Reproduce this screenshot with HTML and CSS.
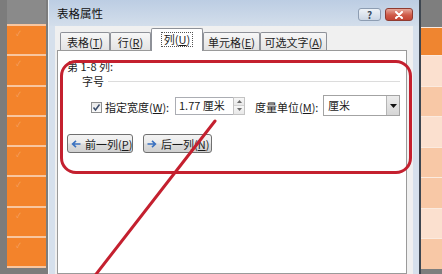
FILE: index.html
```html
<!DOCTYPE html>
<html lang="zh-CN">
<head>
<meta charset="utf-8">
<title>表格属性</title>
<link rel="stylesheet" href="styles.css">
</head>
<body>
<div class="screen">
  <div class="sheet-left">
    <div class="cells">
      <div class="head"></div>
      <div class="cell"><span class="mark">✓</span></div>
      <div class="cell"><span class="mark">✓</span></div>
      <div class="cell"><span class="mark">✓</span></div>
      <div class="cell"><span class="mark">✓</span></div>
      <div class="cell"><span class="mark">✓</span></div>
      <div class="cell"><span class="mark">✓</span></div>
      <div class="cell"><span class="mark">✓</span></div>
      <div class="cell last"><span class="mark">✓</span></div>
    </div>
  </div>

  <div class="dialog">
    <div class="titlebar">
      <span class="title">表格属性</span>
      <div class="caption">
        <span class="cbtn help">?</span>
        <span class="cbtn close">
          <svg width="10" height="8" viewBox="0 0 10 8"><path d="M2 1 L8 7 M8 1 L2 7" stroke="#fff" stroke-width="2" stroke-linecap="round"/></svg>
        </span>
      </div>
    </div>
    <div class="frame">
      <div class="client">
        <div class="tabs">
          <div class="tab t1">表格(<u>T</u>)</div>
          <div class="tab t2">行(<u>R</u>)</div>
          <div class="tab t3 sel"><span class="focus">列(<u>U</u>)</span></div>
          <div class="tab t4">单元格(<u>E</u>)</div>
          <div class="tab t5">可选文字(<u>A</u>)</div>
        </div>
        <div class="panel">
          <div class="cols-label">第 1-8 列:</div>
          <div class="group-head"><span>字号</span><span class="rule"></span></div>
          <div class="width-row">
            <span class="check">
              <svg width="9" height="9" viewBox="0 0 9 9"><path d="M1.5 4.5 L3.5 7 L7.5 1.5" fill="none" stroke="#3b4d6b" stroke-width="1.5"/></svg>
            </span>
            <span class="lab lab1">指定宽度(<u>W</u>):</span>
            <div class="spin">
              <span class="val">1.77 厘米</span>
              <span class="spinbtns">
                <span class="sb"><svg width="5" height="3" viewBox="0 0 5 3"><path d="M0 3 L2.5 0 L5 3Z" fill="#6b6b6b"/></svg></span>
                <span class="sb"><svg width="5" height="3" viewBox="0 0 5 3"><path d="M0 0 L2.5 3 L5 0Z" fill="#6b6b6b"/></svg></span>
              </span>
            </div>
            <span class="lab lab2">度量单位(<u>M</u>):</span>
            <div class="select">
              <span class="sval">厘米</span>
              <span class="arrow"><svg width="7" height="4" viewBox="0 0 7 4"><path d="M0 0 L3.5 4 L7 0Z" fill="#111"/></svg></span>
            </div>
          </div>
          <div class="nav-row">
            <span class="btn b1">
              <svg class="ico" width="10" height="8" viewBox="0 0 10 8"><path d="M9.5 4 H2 M5 0.8 L1.6 4 L5 7.2" fill="none" stroke="#3b72c0" stroke-width="1.6"/></svg>
              <span class="btxt">前一列(<u>P</u>)</span>
            </span>
            <span class="btn b2">
              <svg class="ico" width="10" height="8" viewBox="0 0 10 8"><path d="M0.5 4 H8 M5 0.8 L8.4 4 L5 7.2" fill="none" stroke="#3b72c0" stroke-width="1.6"/></svg>
              <span class="btxt">后一列(<u>N</u>)</span>
            </span>
          </div>
        </div>
      </div>
    </div>
  </div>

  <div class="sheet-right">
    <div class="rhead"></div>
    <div class="rrow first orange"></div>
    <div class="rrow light"></div>
    <div class="rrow med"></div>
    <div class="rrow light"></div>
    <div class="rrow med"></div>
    <div class="rrow med"></div>
    <div class="rrow light"></div>
    <div class="rrow med"></div>
  </div>

  <div class="annot-rect"></div>
  <svg class="annot-line" width="442" height="274" viewBox="0 0 442 274">
    <line x1="215" y1="121" x2="90" y2="282" stroke="#c4202f" stroke-width="3" stroke-linecap="round"/>
  </svg>
</div>
</body>
</html>
```

FILE: styles.css
```css
* { box-sizing: border-box; margin: 0; padding: 0; }
html, body { width: 442px; height: 274px; overflow: hidden; }
body {
  font-family: "Noto Sans CJK SC", "Noto Sans", sans-serif;
  font-size: 11px;
  line-height: 14px;
  color: #1b1b1b;
  background: #808080;
}
u { text-decoration: underline; text-underline-offset: 1px; }

.screen { position: relative; display: flex; width: 442px; height: 274px; overflow: hidden; }

/* left spreadsheet strip */
.sheet-left { width: 48px; flex: none; background: #7c7c7c; padding-left: 7px; }
.cells { width: 39px; }
.cells .head { height: 24px; background: #8a8a8a; }
.cell {
  height: 30.3px;
  border-top: 2px solid #f8c6a0;
  background: #f3832b;
  padding: 3px 0 0 9px;
}
.cell.last { height: 32.3px; border-bottom: 2px solid #f8c6a0; }
.mark { display: block; font-size: 7px; line-height: 8px; color: #f5a46a; }

/* dialog */
.dialog {
  width: 373px; flex: none;
  display: flex; flex-direction: column;
  background: #d6e0ec;
  border-left: 1px solid #eef3f8;
  border-right: 2px solid #3e4650;
}
.titlebar {
  height: 26px; flex: none;
  display: flex; align-items: flex-start;
  padding: 6px 6px 0 8px;
  background: linear-gradient(#bccde3, #d3deeb);
}
.title { flex: 1; font-size: 11.5px; line-height: 14px; color: #111; }
.caption { display: flex; gap: 4px; margin-top: 2px; }
.cbtn {
  height: 13px; border-radius: 3px;
  display: flex; align-items: center; justify-content: center;
}
.help {
  width: 23px;
  border: 1px solid #8d9db2;
  background: linear-gradient(#eef2f7, #cbd6e4);
  color: #3b4b60; font-size: 10px; line-height: 11px; font-weight: bold;
}
.close {
  width: 28px;
  border: 1px solid #8f3b31;
  background: linear-gradient(#e7a99c, #cf5a48 55%, #c24433);
}

.frame { flex: 1; display: flex; padding: 0 6px; }
.client {
  flex: 1; display: flex; flex-direction: column;
  background: #f0f0f0;
  padding: 2px 6px 0 2px;
}

.tabs { height: 22px; flex: none; display: flex; align-items: flex-end; padding-left: 3px; }
.tab {
  height: 18px;
  border: 1px solid #8e9198;
  border-bottom: none;
  border-radius: 2px 2px 0 0;
  background: linear-gradient(#f7f7f7, #e3e3e3);
  display: flex; align-items: center; justify-content: center;
  line-height: 14px;
}
.t1 { width: 50px; }
.t2 { width: 41px; }
.t3 { width: 52px; }
.t4 { width: 57px; }
.t5 { width: 67px; }
.tab.sel {
  height: 23px; margin-bottom: -1px;
  background: #fff;
  position: relative; z-index: 1;
  padding-bottom: 1px;
}
.focus { border: 1px dotted #555; padding: 0 2px; line-height: 13px; }

.panel {
  flex: 1;
  border: 1px solid #9a9a9a;
  background: #fff;
  padding: 8px 0 0 9px;
}
.cols-label { height: 14px; }
.group-head { margin-top: 1px; height: 14px; display: flex; align-items: center; padding-left: 15px; }
.rule { flex: 1; height: 1px; background: #dcdcdc; margin: 0 6px 0 4px; }

.width-row { margin-top: 7px; height: 21px; display: flex; align-items: center; padding-left: 24px; }
.check {
  width: 11px; height: 11px; margin-top: 4px; margin-right: 3px;
  border: 1px solid #8e8f8f;
  background: linear-gradient(#e9e9e9, #fafafa);
  display: flex; align-items: center; justify-content: center;
}
.lab { margin-top: 3px; white-space: nowrap; }
.lab1 { width: 70px; }
.lab2 { width: 68px; margin-left: 10px; }
.spin { width: 70px; height: 18px; display: flex; }
.val {
  flex: 1; border: 1px solid #abadb3; border-right: none;
  padding-left: 3px; line-height: 15px; background: #fff;
}
.spinbtns { width: 12px; display: flex; flex-direction: column; border: 1px solid #c3c3c3; }
.sb { flex: 1; display: flex; align-items: center; justify-content: center; background: linear-gradient(#f7f7f7, #e8e8e8); }
.sb + .sb { border-top: 1px solid #d2d2d2; }
.select {
  width: 77px; height: 21px; display: flex;
  border: 1px solid #a3a3a3; background: #fff;
}
.sval { flex: 1; padding-left: 4px; line-height: 19px; }
.arrow {
  width: 13px; display: flex; align-items: center; justify-content: center;
  background: linear-gradient(#ececec, #d6d6d6); border-left: 1px solid #b5b5b5;
}

.nav-row { margin-top: 18px; display: flex; gap: 10px; }
.btn {
  height: 19px;
  display: flex; align-items: center; gap: 4px;
  padding-left: 3px;
  border: 1px solid #707070; border-radius: 3px;
  background: linear-gradient(#f3f3f3 0%, #ebebeb 48%, #dddddd 52%, #d0d0d0 100%);
  white-space: nowrap;
}
.ico { flex: none; display: block; }
.btxt { line-height: 14px; }
.b1 { width: 66px; }
.b2 { width: 69px; }

.sheet-right { width: 21px; flex: none; background: #7e7e7e; }
.rhead { height: 27px; }
.rrow { height: 30.5px; border-top: 1px solid #fbeadf; }
.rrow.first { height: 28px; }
.orange { background: #ef8530; }
.light { background: #fbe0cf; }
.med { background: #f8c8a6; }

/* annotations drawn over the screenshot */
.annot-rect {
  position: absolute; left: 60px; top: 60px;
  width: 352px; height: 114px;
  border: 3px solid #c4202f; border-radius: 16px;
  pointer-events: none;
}
.annot-line { position: absolute; left: 0; top: 0; pointer-events: none; }
```
